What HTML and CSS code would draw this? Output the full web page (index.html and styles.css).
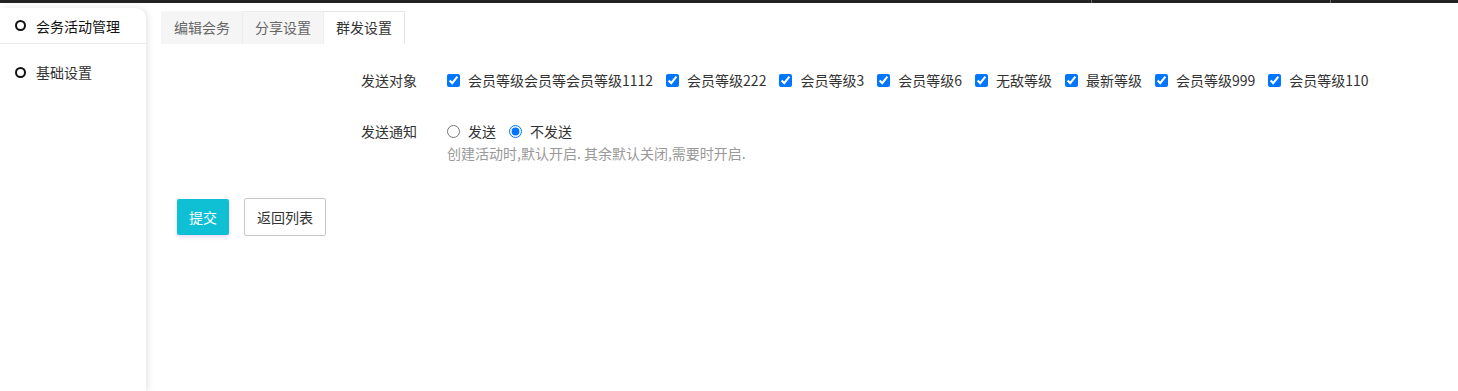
FILE: index.html
```html
<!DOCTYPE html>
<html lang="zh-CN">
<head>
    <meta charset="UTF-8">
    <title>群发设置</title>
    <link rel="stylesheet" href="styles.css">
</head>
<body>
    <div class="top-bar">
        <span class="top-sep sep-one"></span>
        <span class="top-sep sep-two"></span>
    </div>
    <div class="layout">
        <aside class="sidebar">
            <div class="side-item active"><span class="ring"></span>会务活动管理</div>
            <div class="side-item"><span class="ring"></span>基础设置</div>
        </aside>
        <main class="main">
            <div class="tabs">
                <a class="tab">编辑会务</a>
                <a class="tab">分享设置</a>
                <a class="tab current">群发设置</a>
            </div>

            <form class="send-form">
                <div class="form-row">
                    <label class="form-label">发送对象</label>
                    <div class="form-field checks">
                        <label class="check"><input type="checkbox" checked>会员等级会员等会员等级1112</label>
                        <label class="check"><input type="checkbox" checked>会员等级222</label>
                        <label class="check"><input type="checkbox" checked>会员等级3</label>
                        <label class="check"><input type="checkbox" checked>会员等级6</label>
                        <label class="check"><input type="checkbox" checked>无敌等级</label>
                        <label class="check"><input type="checkbox" checked>最新等级</label>
                        <label class="check"><input type="checkbox" checked>会员等级999</label>
                        <label class="check"><input type="checkbox" checked>会员等级110</label>
                    </div>
                </div>

                <div class="form-row notice-row">
                    <label class="form-label">发送通知</label>
                    <div class="form-field">
                        <div class="checks">
                            <label class="check"><input type="radio" name="notify">发送</label>
                            <label class="check"><input type="radio" name="notify" checked>不发送</label>
                        </div>
                        <p class="help-text">创建活动时,默认开启. 其余默认关闭,需要时开启.</p>
                    </div>
                </div>

                <div class="actions">
                    <button type="button" class="btn btn-submit">提交</button>
                    <button type="button" class="btn btn-back">返回列表</button>
                </div>
            </form>
        </main>
    </div>
</body>
</html>
```

FILE: styles.css
```css
* { margin: 0; padding: 0; box-sizing: border-box; }

body {
    font-family: "Noto Sans CJK SC", "Noto Sans", sans-serif;
    font-size: 14px;
    color: #333333;
    background: #ffffff;
    height: 100vh;
    overflow: hidden;
}

.top-bar {
    position: relative;
    height: 3px;
    background: #222222;
}

.top-sep {
    position: absolute;
    top: 0;
    width: 1px;
    height: 3px;
    background: #666666;
}

.sep-one { left: 1091px; }
.sep-two { left: 1330px; }

.layout {
    display: flex;
    height: calc(100vh - 3px);
}

.sidebar {
    width: 146px;
    flex-shrink: 0;
    margin-top: 5px;
    background: #ffffff;
    border-top-right-radius: 10px;
    box-shadow: 2px 0 6px rgba(0, 0, 0, 0.1);
}

.side-item {
    display: flex;
    align-items: center;
    gap: 10px;
    padding-left: 15px;
    height: 36px;
    color: #333333;
}

.side-item.active {
    color: #111111;
    border-bottom: 1px solid #ebebeb;
}

.side-item + .side-item {
    height: 56px;
}

.ring {
    flex-shrink: 0;
    width: 11px;
    height: 11px;
    border: 2px solid #111111;
    border-radius: 50%;
}

.main {
    flex: 1;
    padding: 8px 0 0 15px;
}

.tabs {
    display: flex;
}

.tab {
    height: 33px;
    line-height: 31px;
    padding: 0 12px;
    color: #666666;
    background: #f5f5f5;
    border: 1px solid #ececec;
    border-left: none;
    border-bottom: none;
}

.tab:first-child {
    border-left: 1px solid #f5f5f5;
    border-top-color: #f5f5f5;
}

.tab.current {
    background: #ffffff;
    color: #333333;
    border-color: #e6e6e6;
}

.send-form {
    padding-top: 26px;
}

.form-row {
    display: flex;
    line-height: 20px;
}

.notice-row {
    margin-top: 31px;
}

.form-label {
    width: 286px;
    padding-right: 30px;
    text-align: right;
    color: #333333;
}

.checks {
    display: flex;
    align-items: center;
}

.check {
    display: flex;
    align-items: center;
    margin-right: 13px;
    color: #333333;
}

.check input {
    width: 13px;
    height: 13px;
    margin: 0 8px 0 0;
}

.help-text {
    margin-top: 2px;
    color: #999999;
}

.actions {
    display: flex;
    align-items: center;
    gap: 15px;
    margin: 35px 0 0 16px;
}

.btn {
    font-family: inherit;
    font-size: 14px;
    border-radius: 2px;
    cursor: pointer;
}

.btn-submit {
    height: 36px;
    padding: 0 12px;
    border: none;
    color: #ffffff;
    background: #0fc0d4;
    box-shadow: 0 2px 4px rgba(160, 100, 230, 0.25);
}

.btn-back {
    height: 38px;
    padding: 0 12px;
    color: #333333;
    background: #ffffff;
    border: 1px solid #c8c8c8;
}
```
